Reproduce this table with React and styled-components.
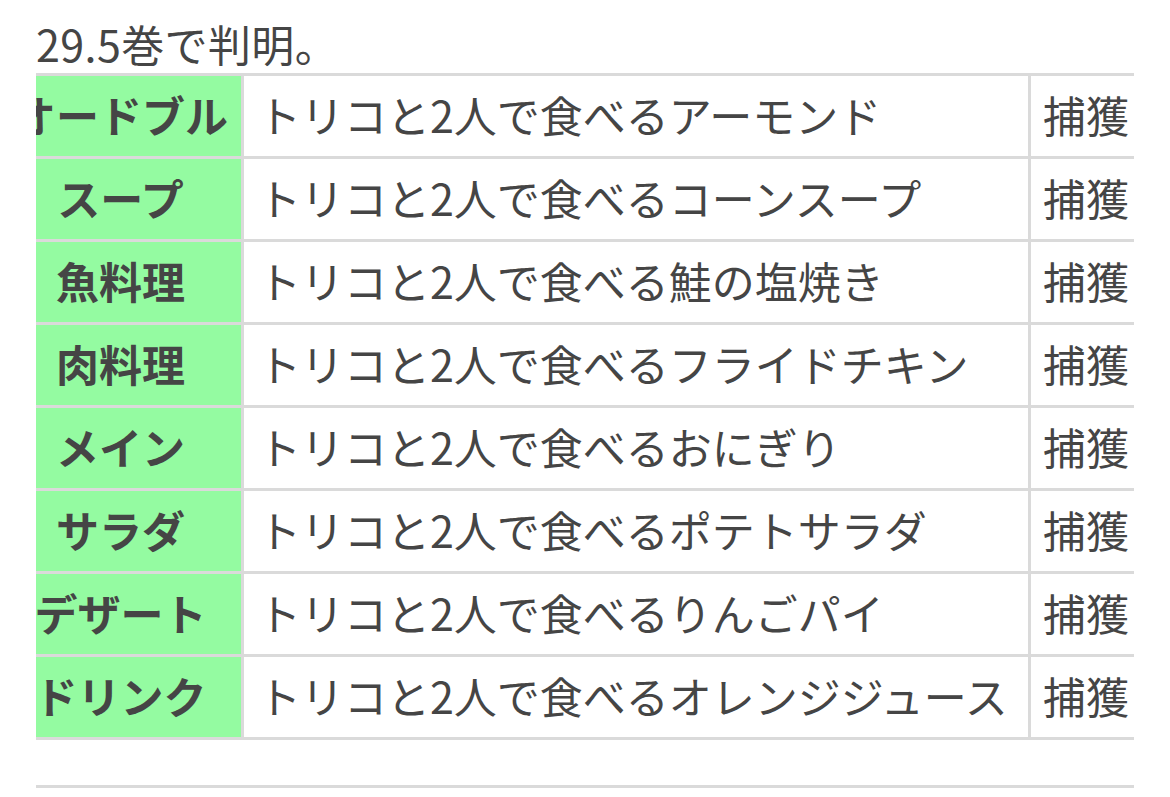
import React, { useLayoutEffect, useRef } from "react";
import styled, { createGlobalStyle } from "styled-components";

const Global = createGlobalStyle`
  html, body { margin: 0; padding: 0; background: #ffffff; }
  body {
    font-family: "Noto Sans CJK JP", "Noto Sans", sans-serif;
    color: #454545;
  }
`;

const Page = styled.div`
  padding: 0 36px;
`;

const Title = styled.p`
  margin: 0;
  padding-top: 13px;
  font-size: 43px;
  line-height: 60px;
  letter-spacing: 0.4px;
  color: #454545;
`;

const ScrollBox = styled.div`
  overflow-x: auto;
  scrollbar-width: none;
  &::-webkit-scrollbar { display: none; }
`;

const Table = styled.table`
  border-collapse: separate;
  border-spacing: 0;
  table-layout: fixed;
  width: 1235px;
  border-top: 3px solid #dadada;
`;

const Head = styled.th`
  box-sizing: border-box;
  height: 83px;
  padding: 0 0 4px;
  background: #94fba1;
  font-size: 43px;
  font-weight: 700;
  text-align: center;
  white-space: nowrap;
  color: #454545;
  border-right: 3px solid #dadada;
  border-bottom: 3px solid #dadada;
`;

const Cell = styled.td`
  box-sizing: border-box;
  height: 83px;
  padding: 0 ${(p) => (p.$tight ? "12px" : "14px")} 4px;
  font-size: 43px;
  white-space: nowrap;
  overflow: hidden;
  color: #454545;
  background: #ffffff;
  border-right: ${(p) => (p.$last ? "none" : "3px solid #dadada")};
  border-bottom: 3px solid #dadada;
`;

const Rule = styled.hr`
  margin: 45px 0 0;
  border: none;
  height: 3px;
  background: #dadada;
`;

const rows = [
  ["オードブル", "トリコと2人で食べるアーモンド"],
  ["スープ", "トリコと2人で食べるコーンスープ"],
  ["魚料理", "トリコと2人で食べる鮭の塩焼き"],
  ["肉料理", "トリコと2人で食べるフライドチキン"],
  ["メイン", "トリコと2人で食べるおにぎり"],
  ["サラダ", "トリコと2人で食べるポテトサラダ"],
  ["デザート", "トリコと2人で食べるりんごパイ"],
  ["ドリンク", "トリコと2人で食べるオレンジジュース"],
];

export default function App() {
  const boxRef = useRef(null);
  useLayoutEffect(() => {
    if (boxRef.current) boxRef.current.scrollLeft = 36;
  }, []);
  return (
    <Page>
      <Global />
      <Title>29.5巻で判明。</Title>
      <ScrollBox ref={boxRef}>
        <Table>
          <colgroup>
            <col style={{ width: 244 }} />
            <col style={{ width: 787 }} />
            <col style={{ width: 204 }} />
          </colgroup>
          <tbody>
            {rows.map(([course, dish]) => (
              <tr key={course}>
                <Head scope="row">{course}</Head>
                <Cell>{dish}</Cell>
                <Cell $tight $last>捕獲</Cell>
              </tr>
            ))}
          </tbody>
        </Table>
      </ScrollBox>
      <Rule />
    </Page>
  );
}
